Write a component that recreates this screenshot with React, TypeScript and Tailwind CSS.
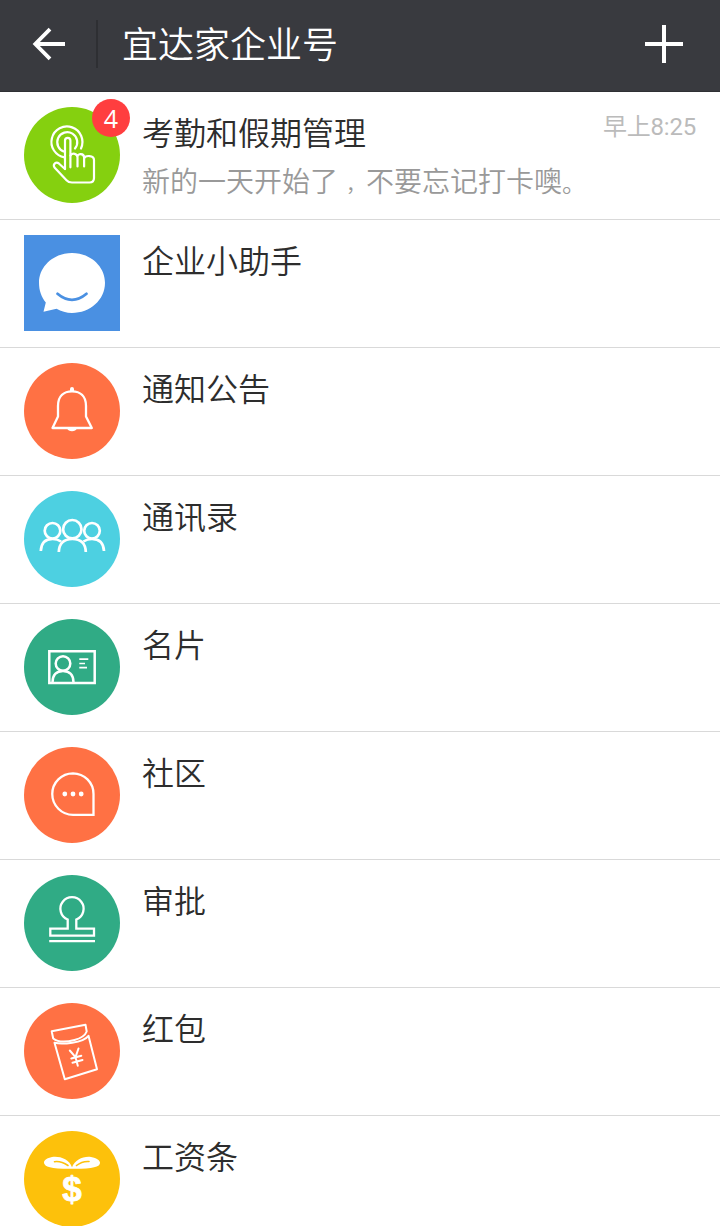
import React from "react";

type ChatItem = {
  id: number;
  title: string;
  icon: React.ReactNode;
  color: string;
  square?: boolean;
  message?: string;
  time?: string;
  badge?: number;
};

const TapIcon = () => (
  <g strokeWidth="2.200">
    <path d="M40.500 50.300A15.500 15.500 0 1 1 57 41.500" />
    <path d="M40.500 44.800A10 10 0 1 1 51 41.500" />
    <path d="M41 62V33.500a2.700 2.700 0 0 1 5.400 0V60.300" />
    <path d="M46.500 48.500c2-3 7-2 7 2v9M53.500 50c0-4 6.600-4 6.600 0.500v9M60.100 51.500c1-3.500 9.900-3.500 9.900 1.500v18c0 3-1.500 4.500-4.500 4.500H48c-2.500 0-4-.6-5.500-2.300L30.500 60.500c-2-3.500 1.500-6.300 4.600-3.800L41 62" />
  </g>
);

const SmileIcon = () => (
  <g>
    <path
      d="M48 18C66 18 81 31 81 47.800C81 65 66 78 48 78C42.500 78 37 76.300 32.500 73.800L19.500 76.700L21.800 67.500C17.500 62.500 15 55.500 15 47.800C15 31 30 18 48 18Z"
      fill="#fff"
      stroke="none"
    />
    <path d="M33.500 58.800Q48 71 62.500 58.800" stroke="#4a90e2" strokeWidth="2.800" />
  </g>
);

const BellIcon = () => (
  <g strokeWidth="2.300">
    <path d="M28.500 65L34 53.500V43C34 33 40 28.300 48 28.300S62 33 62 43V53.500L67.800 65Z" />
    <path d="M46 28v-2a2 2 0 0 1 4 0v2ZM43.200 65.500a5 3.800 0 0 0 9.600 0Z" fill="#fff" stroke="none" />
  </g>
);

const PeopleIcon = () => (
  <g strokeWidth="2.700" strokeLinecap="butt">
    <circle cx="28.500" cy="39.800" r="7.800" />
    <circle cx="68" cy="39.800" r="7.800" />
    <circle cx="48.300" cy="38.200" r="9.200" />
    <path d="M16.800 60C17.200 51 22 48 28.500 48Q33.500 48 37 50.500M80 60C79.500 51 74.500 48 68 48Q63 48 59.500 50.500" />
    <path d="M34.800 61C35.200 51.500 40 48 48.300 48S61.500 51.500 61.800 61" />
  </g>
);

const CardIcon = () => (
  <g strokeWidth="2.500" strokeLinecap="butt">
    <path d="M25.300 32.200H70.700V63.900H25.300Z" strokeLinejoin="miter" />
    <circle cx="39" cy="44.500" r="7.300" />
    <path d="M28.500 63.500C28.500 55.500 33 52 39 52S49.500 55.500 49.500 63.500" />
    <path d="M55.300 40.200H64.300M55.300 44.500H61M55.300 48.600H63" strokeWidth="1.700" />
  </g>
);

const BubbleIcon = () => (
  <g strokeWidth="2.300">
    <path d="M49 26.300a20.700 20.700 0 0 1 20.500 20.700V67.800H49a20.700 20.700 0 0 1 0-41.500Z" strokeLinejoin="miter" />
    <g fill="#fff" stroke="none">
      <circle cx="40.800" cy="47" r="2.400" />
      <circle cx="49" cy="47" r="2.400" />
      <circle cx="57.200" cy="47" r="2.400" />
    </g>
  </g>
);

const StampIcon = () => (
  <g strokeWidth="2.300" strokeLinecap="butt" strokeLinejoin="miter">
    <path d="M43.700 53.700V44.500A11.600 11.600 0 1 1 52.300 44.500V53.700H70V60.600H26.300V53.700Z" />
    <path d="M25.200 66.200H71" />
  </g>
);

const PacketIcon = () => (
  <g strokeWidth="2">
    <path d="M27.700 28.300L61.500 21.800L62.700 28.500C61 33 56 35.500 50.500 37C43 39 34 39.300 29.200 35.500Z" />
    <path d="M30.500 39.800C38 41.600 59 40 64.500 32.800L73 66.200L40.800 76.200Z" />
    <path d="M45.800 47.500L51.500 54.200L54.500 45.500M51.500 54.200L53.800 62.800M47.300 55.500L57.300 52.700M48.500 59.700L58.500 57" />
  </g>
);

const SproutIcon = () => (
  <g>
    <g fill="#fff" stroke="none">
      <path d="M48 36.300C45 28 36 25 28 26C23 27 20 29 20 31.500C20 36 28 38 48 37.800Z" />
      <path d="M48 36.300C51 29 59 25 67 26C73 27 76 29.500 76 32C76 36 68 38 48 37.800Z" />
    </g>
    <path d="M30.500 30.700Q37 29.800 44 34.500M52.500 34.500Q58 30 65 30.500" stroke="#fdc10b" strokeWidth="1.600" />
    <text
      x="48"
      y="69.500"
      textAnchor="middle"
      fill="#fff"
      stroke="#fff"
      strokeWidth="0.800"
      className="font-['Liberation_Sans'] text-[35px] font-bold"
    >
      $
    </text>
  </g>
);

const items: ChatItem[] = [
  {
    id: 1,
    title: "考勤和假期管理",
    icon: <TapIcon />,
    color: "bg-[#85d00f]",
    message: "新的一天开始了，不要忘记打卡噢。",
    time: "早上8:25",
    badge: 4,
  },
  { id: 2, title: "企业小助手", icon: <SmileIcon />, color: "bg-[#4a90e2]", square: true },
  { id: 3, title: "通知公告", icon: <BellIcon />, color: "bg-[#ff7144]" },
  { id: 4, title: "通讯录", icon: <PeopleIcon />, color: "bg-[#4dd0e1]" },
  { id: 5, title: "名片", icon: <CardIcon />, color: "bg-[#30ab85]" },
  { id: 6, title: "社区", icon: <BubbleIcon />, color: "bg-[#ff7144]" },
  { id: 7, title: "审批", icon: <StampIcon />, color: "bg-[#30ab85]" },
  { id: 8, title: "红包", icon: <PacketIcon />, color: "bg-[#ff7144]" },
  { id: 9, title: "工资条", icon: <SproutIcon />, color: "bg-[#fdc10b]" },
];

const Header = () => (
  <header className="flex h-[92px] shrink-0 items-center border-b border-[#2f3034] bg-[#393a3f] pb-[3px] text-white">
    <div className="flex h-12 w-[98px] items-center border-r-2 border-[#2e2f33] pl-8">
      <svg viewBox="0 0 34 34" className="h-[34px] w-[34px]" fill="none" stroke="#fff" strokeWidth="3.800">
        <path d="M33 17H3M18 2.200L3.300 17L18 31.800" />
      </svg>
    </div>
    <h1 className="-mt-[5px] ml-6 text-[36px] leading-[48px] font-[350]">宜达家企业号</h1>
    <svg viewBox="0 0 38 38" className="mr-[37px] ml-auto h-[38px] w-[38px]" stroke="#fff" strokeWidth="4">
      <path d="M19 0V38M0 19H38" />
    </svg>
  </header>
);

// the comma sits in the middle of its cell, the full stop is a bit smaller
const Message = ({ text }: { text: string }) => (
  <p className="mt-[5px] text-[28px] leading-10 font-[350] whitespace-nowrap text-[#999]">
    {text.split(/([，。])/).map((part, i) => {
      if (part === "，") return <span key={i} className="pl-2 text-[20px]">{part}</span>;
      if (part === "。") return <span key={i} className="text-[24px]">{part}</span>;
      return part;
    })}
  </p>
);

const ChatRow = ({ item }: { item: ChatItem }) => (
  <li className="flex h-32 border-b border-[#d9d9d9] pt-[15px] pr-6 pl-6">
    <div className="relative h-24 w-24 shrink-0">
      <div className={`h-24 w-24 ${item.color} ${item.square ? "" : "rounded-full"}`}>
        <svg viewBox="0 0 96 96" className="h-24 w-24" fill="none" stroke="#fff" strokeLinecap="round" strokeLinejoin="round">
          {item.icon}
        </svg>
      </div>
      {item.badge && (
        <span className="absolute -top-2 -right-[10px] flex h-[38px] w-[38px] items-center justify-center rounded-full bg-[#ff3e3f] font-['Open_Sans'] text-[25px] leading-none text-white">
          {item.badge}
        </span>
      )}
    </div>
    <div className="ml-[22px] min-w-0 flex-1">
      <div className="flex justify-between">
        <h2 className="text-[32px] leading-[48px] font-[350] text-[#2d2d2d]">{item.title}</h2>
        {item.time && (
          <span className="mt-1 font-['Roboto','Noto_Sans_CJK_SC',sans-serif] text-[24px] leading-8 font-normal tracking-[-0.2px] text-[#bbb]">
            {item.time}
          </span>
        )}
      </div>
      {item.message && <Message text={item.message} />}
    </div>
  </li>
);

const App = () => {
  return (
    <div className="flex h-[1226px] w-[720px] flex-col overflow-hidden bg-white font-['Noto_Sans_CJK_SC',sans-serif]">
      <Header />
      <ul>
        {items.map((item) => (
          <ChatRow key={item.id} item={item} />
        ))}
      </ul>
    </div>
  );
};

export default App;
